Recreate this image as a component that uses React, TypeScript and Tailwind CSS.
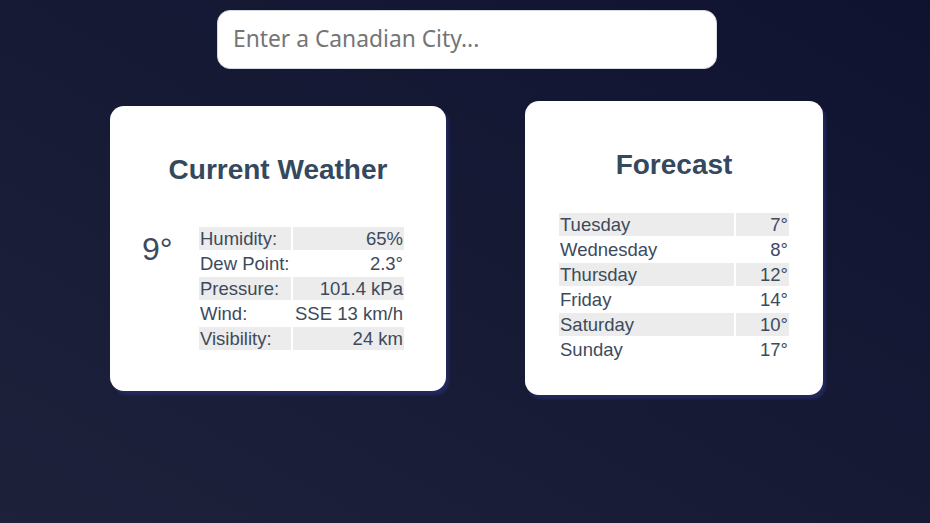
import React from "react";

const current = [
  ["Humidity:", "65%"],
  ["Dew Point:", "2.3°"],
  ["Pressure:", "101.4 kPa"],
  ["Wind:", "SSE 13 km/h"],
  ["Visibility:", "24 km"],
];

const forecast = [
  ["Tuesday", "7°"],
  ["Wednesday", "8°"],
  ["Thursday", "12°"],
  ["Friday", "14°"],
  ["Saturday", "10°"],
  ["Sunday", "17°"],
];

export default function App() {
  return (
    <div className="h-[523px] w-full overflow-hidden bg-[linear-gradient(to_top_right,#1e213a,#0f1330)] pt-[10px] font-['Liberation_Sans',Arial,sans-serif]">
      <div className="flex justify-center pl-[4px]">
        <input
          type="text"
          placeholder="Enter a Canadian City..."
          className="h-[59px] w-[500px] rounded-[13px] border border-[#d6d9e0] bg-white px-[15px] pb-[2px] font-['Noto_Sans',sans-serif] text-[22.8px] text-[#333] outline-none placeholder:text-[#757575]"
        />
      </div>
      <div className="mt-[32px] flex items-center justify-center gap-[79px] pl-[3px]">
        <div className="w-[336px] rounded-[14px] bg-white pb-[39px] pt-[48px] shadow-[3px_4px_3px_rgba(38,46,105,0.75)]">
          <h2 className="text-center text-[28px] font-bold leading-[32px] text-[#34495e]">Current Weather</h2>
          <div className="mt-[39px] flex items-start pl-[32px] pr-[40px]">
            <div className="mt-[6px] w-[55px] text-[32px] leading-[37px] text-[#3d4a5c]">9°</div>
            <table className="border-separate border-spacing-[2px] text-[18.5px] leading-[21px] text-[#3d4a5c]">
              <tbody>
                {current.map(([k, v], i) => (
                  <tr key={k} className={i % 2 === 0 ? "bg-[#ececec]" : ""}>
                    <td className="w-[92px] px-px py-px text-left whitespace-nowrap">{k}</td>
                    <td className="w-[111px] px-px py-px text-right whitespace-nowrap">{v}</td>
                  </tr>
                ))}
              </tbody>
            </table>
          </div>
        </div>
        <div className="w-[298px] rounded-[14px] bg-white px-[32px] pb-[32px] pt-[48px] shadow-[3px_4px_3px_rgba(38,46,105,0.75)]">
          <h2 className="text-center text-[28px] font-bold leading-[32px] text-[#34495e]">Forecast</h2>
          <table className="mt-[30px] w-[234px] border-separate border-spacing-[2px] text-[18.5px] leading-[21px] text-[#3d4a5c]">
            <tbody>
              {forecast.map(([k, v], i) => (
                <tr key={k} className={i % 2 === 0 ? "bg-[#ececec]" : ""}>
                  <td className="w-[175px] px-px py-px text-left">{k}</td>
                  <td className="w-[53px] px-px py-px text-right">{v}</td>
                </tr>
              ))}
            </tbody>
          </table>
        </div>
      </div>
    </div>
  );
}
